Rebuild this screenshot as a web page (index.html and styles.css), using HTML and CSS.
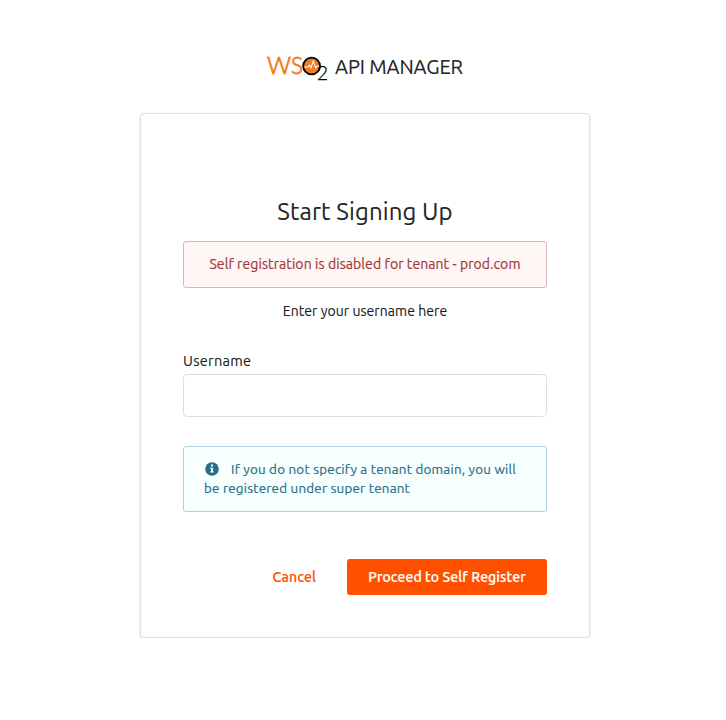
FILE: index.html
```html
<!DOCTYPE html>
<html lang="en">
<head>
<meta charset="utf-8">
<title>WSO2 API Manager</title>
<link rel="stylesheet" href="styles.css">
</head>
<body>
<header class="product">
  <svg class="logo" width="62" height="28" viewBox="0 0 62 28" role="img" aria-label="WSO2">
    <text class="logo-letters" x="0" y="19" textLength="24" lengthAdjust="spacingAndGlyphs">W</text>
    <text class="logo-letters" x="24" y="19" textLength="12" lengthAdjust="spacingAndGlyphs">S</text>
    <circle cx="44.6" cy="11" r="8.4" fill="#f47b20" stroke="#000" stroke-width="1.8"/>
    <path d="M37.2 12h4l1.2-1.8 1.6 2.6 2.2-6.6 2.4 6.6 1.2-1.6h2.4" fill="none" stroke="#fff" stroke-width="1.1"/>
    <text class="logo-two" x="50" y="25" textLength="11" lengthAdjust="spacingAndGlyphs">2</text>
  </svg>
  <span class="product-name">API MANAGER</span>
</header>
<main class="card">
  <h2 class="title">Start Signing Up</h2>
  <div class="message error">Self registration is disabled for tenant - prod.com</div>
  <p class="hint">Enter your username here</p>
  <form class="form">
    <label class="label" for="username">Username</label>
    <input class="input" id="username" type="text">
    <div class="message info">
      <svg class="info-icon" width="14" height="14" viewBox="0 0 14 14" aria-hidden="true">
        <circle cx="7" cy="7" r="6.8" fill="#276f86"/>
        <path d="M6 2.6h2v2H6zM5.2 5.7H8v3.7h.8v1.2H5.2V9.4H6V6.9h-.8z" fill="#f8ffff"/>
      </svg>If you do not specify a tenant domain, you will<br>be registered under super tenant
    </div>
    <div class="actions">
      <a class="cancel" href="#">Cancel</a>
      <button class="submit" type="button">Proceed to Self Register</button>
    </div>
  </form>
</main>
</body>
</html>
```

FILE: styles.css
```css
* { box-sizing: border-box; }
body {
  margin: 0;
  background: #fff;
  color: rgba(0, 0, 0, .87);
  font: 14px/20px Ubuntu, "Noto Sans", sans-serif;
  white-space: nowrap;
  -webkit-text-stroke: .2px;
}
.product {
  display: flex;
  align-items: flex-start;
  height: 113px;
  padding: 55px 0 0 267px;
}
.logo { flex: none; overflow: visible; -webkit-text-stroke: 0; }
.logo-letters { font: 300 23.5px Lato, sans-serif; fill: #f47b20; stroke: #f47b20; stroke-width: .8px; }
.logo-two { font: 300 19px Lato, sans-serif; fill: #000; stroke: #000; stroke-width: .3px; }
.product-name { margin-left: 6px; font-size: 20px; line-height: 24px; letter-spacing: -.1px; }
.card {
  width: 450px;
  height: 525px;
  margin-left: 140px;
  padding: 81px 42px 0;
  border: 1px solid #dedfdf;
  border-radius: 4px;
  box-shadow: 0 1px 2px rgba(34, 36, 38, .2);
}
.title { margin: 0; font-size: 24px; font-weight: 400; line-height: 34px; letter-spacing: .13px; text-align: center; }
.message { border: 1px solid; border-radius: 3px; }
.error {
  height: 47px;
  margin-top: 12px;
  line-height: 45px;
  letter-spacing: .08px;
  text-align: center;
  color: #9f3a38;
  background: #fff6f6;
  border-color: #e0b4b4;
}
.hint { margin: 13px 0 0; letter-spacing: .06px; text-align: center; }
.form { margin: 30px 0 0; }
.label { display: block; height: 23px; font-size: 14.5px; letter-spacing: .3px; }
.input {
  display: block;
  width: 100%;
  height: 43px;
  border: 1px solid #dededf;
  border-radius: 4px;
  background: #fff;
  outline: 0;
}
.info {
  height: 66px;
  margin-top: 29px;
  padding: 13px 20px;
  color: #276f86;
  background: #f8ffff;
  border-color: #a9d5de;
  font-size: 13.4px;
  line-height: 19px;
  letter-spacing: .22px;
}
.info-icon { margin: 0 12px 0 1px; vertical-align: -1.5px; }
.actions { display: flex; justify-content: flex-end; align-items: center; margin-top: 47px; }
.cancel { margin-right: 31px; color: #ff5000; font-weight: 500; letter-spacing: .15px; text-decoration: none; }
.submit {
  width: 200px;
  height: 36px;
  padding: 0;
  border: 0;
  border-radius: 3px;
  background: #ff5000;
  color: #fff;
  font: inherit;
  font-weight: 500;
  letter-spacing: .1px;
}
```
